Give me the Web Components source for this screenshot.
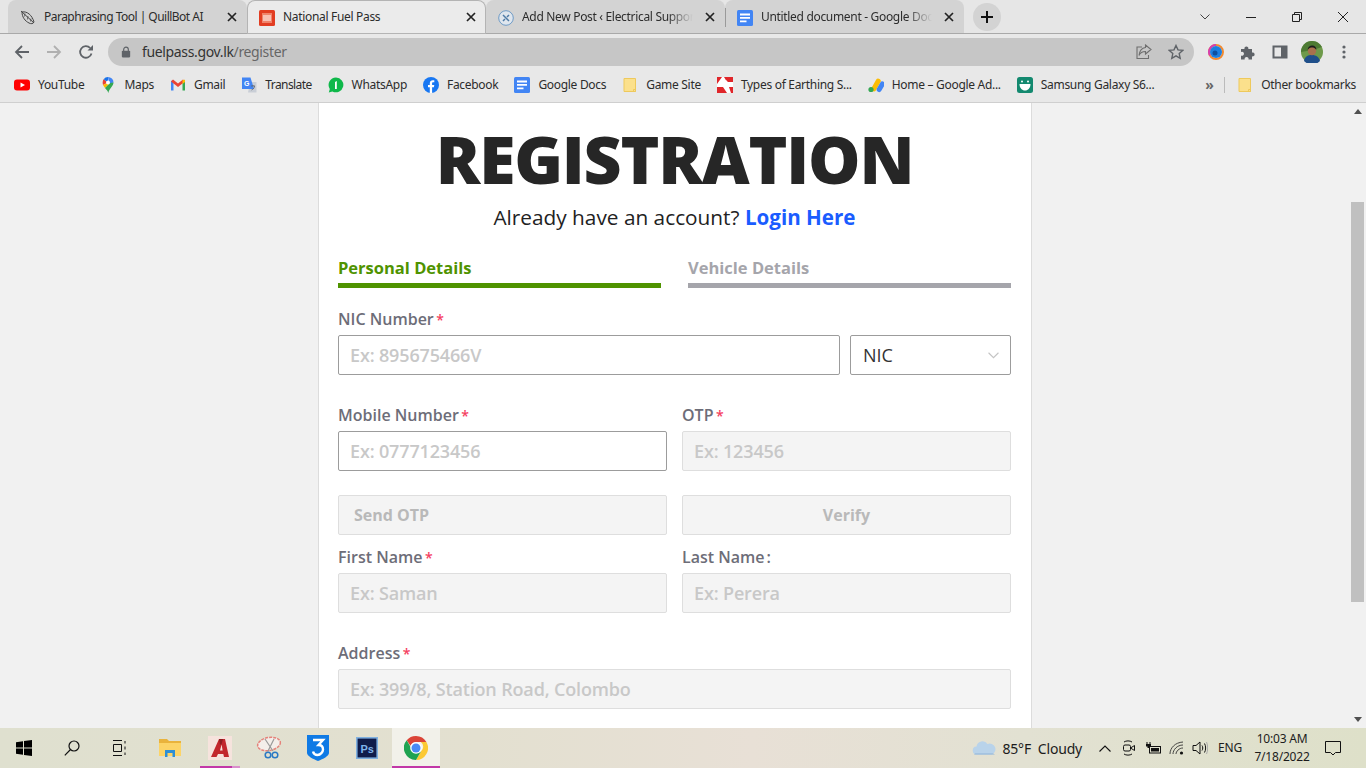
<!DOCTYPE html>
<html lang="en">
<head>
<meta charset="utf-8">
<title>National Fuel Pass</title>
<style>
  html, body { margin: 0; height: 100%; overflow: hidden; }
  body { font-family: "Open Sans", sans-serif; }
</style>
</head>
<body>
<browser-window>
  <reg-page></reg-page>
</browser-window>
<win-taskbar></win-taskbar>

<script>
(function () {
  'use strict';

  const UI_FONT = '"Noto Sans", "Open Sans", sans-serif';

  // ── Icons ──────────────────────────────────────────────────
  const FOLDER = '<svg viewBox="0 0 16 16" width="16" height="16"><path d="M2 1.5h11.5v13H2z" fill="#fbe08c" stroke="#eec95c"/><path d="M11.5 12.5h2v2h-2z" fill="none" stroke="#eec95c"/></svg>';
  const DOCS = '<svg viewBox="0 0 16 16" width="16" height="16"><rect width="16" height="16" rx="1.5" fill="#4285f4"/><path d="M3 3.5h10v2H3zM3 7h10v1.8H3zM3 10.5h6.5v1.8H3z" fill="#fff"/></svg>';

  const ICONS = {
    quill: '<svg viewBox="0 0 16 16" width="16" height="16" fill="none" stroke="#444" stroke-width="1"><path d="M1 1l13 12M2 2c5-1 10 3 12 10-1 2-3 2-5 1C5 11 2 7 2 2z"/><path d="M5 3.5l-.5 3M8 6l-.6 3.5M11 8.500l-.5 3" stroke-width=".7"/></svg>',
    fuel: '<svg viewBox="0 0 16 16" width="16" height="16"><rect width="16" height="16" rx="1.5" fill="#e23d22"/><rect x="3" y="3" width="10" height="10" fill="#f0836a"/><path d="M4 6h8M4 8h8M4 10h8" stroke="#fff" stroke-width="1.1"/></svg>',
    wp: '<svg viewBox="0 0 16 16" width="16" height="16" fill="none"><circle cx="8" cy="8" r="7.300" fill="#dfe6ee" stroke="#6f9bc6"/><path d="M5 5l6 6M11 5L9 7M5 11l2-2" stroke="#4f7ba6" stroke-width="1.500"/></svg>',
    docs: DOCS,
    youtube: '<svg viewBox="0 0 16 16" width="16" height="16"><rect y="2.500" width="16" height="11" rx="3" fill="#f00"/><path d="M6.500 5.500v5L11 8z" fill="#fff"/></svg>',
    maps: '<svg viewBox="0 0 16 16" width="16" height="16"><path d="M8 0a5.500 5.500 0 0 1 5.500 5.500L9 7z" fill="#4285f4"/><path d="M3.600 2.200L8 5.500 3 8C2.500 6 2.500 3.500 3.600 2.200z" fill="#ea4335"/><path d="M3.600 2.200A5.500 5.500 0 0 1 8 0v5.500z" fill="#1a73e8"/><path d="M3 8l5-2.500 1.500 1.500L5 11z" fill="#fbbc04"/><path d="M13.500 5.500C13.500 9 9.500 11 8.300 16c-.4-2-2-3.500-3.300-5l5-5z" fill="#34a853"/><circle cx="8" cy="5.500" r="2" fill="#fff"/></svg>',
    gmail: '<svg viewBox="0 0 16 16" width="16" height="16"><path d="M1 13.500V4l2.500-1V13.500z" fill="#4285f4"/><path d="M12.500 13.500V3L15 4v9.500z" fill="#34a853"/><path d="M1 4.500L3 2.500 8 6.500l5-4 2 2-7 5.500z" fill="#ea4335"/><path d="M12.500 3L15 2.800V5l-2.500 2z" fill="#fbbc04"/></svg>',
    translate: '<svg viewBox="0 0 16 16" width="16" height="16"><path d="M9 5h6.500v10.500H7z" fill="#c9ced6"/><path d="M1 .5h8.500L13 12H1z" fill="#4285f4"/><text x="3" y="9" font-size="7" font-weight="700" font-family="Liberation Sans" fill="#fff">G</text><path d="M10 9h4M12 8v1M10.500 13c2-1 3-2 3-4" stroke="#5f6368" stroke-width=".8" fill="none"/></svg>',
    whatsapp: '<svg viewBox="0 0 16 16" width="16" height="16"><path d="M8 .5a7.400 7.400 0 1 1-3.600 13.900L.8 15.400l1-3.500A7.400 7.400 0 0 1 8 .5z" fill="#0fb84a"/><path d="M7 5l1.800-1V12H7V6z" fill="#fff"/></svg>',
    facebook: '<svg viewBox="0 0 16 16" width="16" height="16"><circle cx="8" cy="8" r="8" fill="#1877f2"/><path d="M6.800 16V10.300H5V8h1.800V6.300C6.800 4.300 8 3.200 9.800 3.200l1.500.1v2h-1c-1 0-1.200.5-1.200 1.100V8h2.200l-.4 2.300H9.100V16z" fill="#fff"/></svg>',
    folder: FOLDER,
    earthing: '<svg viewBox="0 0 16 16" width="16" height="16"><rect width="16" height="16" fill="#fff"/><path d="M0 0h5L0 7zM7 0h9v5H10zM0 10h6l4 6H0zM12 10h4v6h-2z" fill="#e0262a"/><path d="M3 6h6V3l5 5-5 5v-3H3z" fill="#fff"/></svg>',
    ads: '<svg viewBox="0 0 16 16" width="16" height="16"><rect x="5.500" y="1" width="5" height="14" rx="2.500" transform="rotate(30 8 8)" fill="#fbbc04"/><rect x="10.300" y="4" width="5" height="11.500" rx="2.500" transform="rotate(30 12.800 9.700)" fill="#4285f4"/><circle cx="3" cy="12.500" r="2.600" fill="#34a853"/></svg>',
    samsung: '<svg viewBox="0 0 16 16" width="16" height="16"><rect width="16" height="16" rx="2.500" fill="#13896f"/><circle cx="5" cy="4.500" r="1" fill="#fff"/><circle cx="11" cy="4.500" r="1" fill="#fff"/><path d="M2.500 7h11c0 4-2.500 6.500-5.500 6.500S2.500 11 2.500 7z" fill="#fff"/></svg>',
    back: '<svg viewBox="0 0 16 16" width="16" height="16" fill="none" stroke="#5f6368" stroke-width="1.800"><path d="M15 8H2M8 2L2 8l6 6"/></svg>',
    forward: '<svg viewBox="0 0 16 16" width="16" height="16" fill="none" stroke="#b0b0b0" stroke-width="1.800"><path d="M1 8h13M8 2l6 6-6 6"/></svg>',
    reload: '<svg viewBox="0 0 16 16" width="16" height="16" fill="none"><path d="M13.500 9.500A5.800 5.800 0 1 1 12.200 4" stroke="#5f6368" stroke-width="1.800"/><path d="M9.500 6.500H15V1z" fill="#5f6368"/></svg>',
    lock: '<svg viewBox="0 0 12 14" width="10" height="12"><path d="M3.200 6V4a2.800 2.800 0 0 1 5.600 0v2" fill="none" stroke="#5f6368" stroke-width="1.400"/><rect x="1" y="5.500" width="10" height="8" rx="1" fill="#5f6368"/></svg>',
    share: '<svg viewBox="0 0 16 16" width="16" height="16" fill="none" stroke="#6e6e6e" stroke-width="1.100"><path d="M6 3H1v11.500h11.500V11"/><path d="M9.500 1l5.500 4.500L9.500 10V7.500C6 7.500 4 9 3 11.500 3.500 7 6 4 9.500 3.500z"/></svg>',
    star: '<svg viewBox="0 0 16 16" width="16" height="16" fill="none" stroke="#5f6368" stroke-width="1.400"><path d="M8 1.500l2 4.400 4.700.5-3.500 3.200 1 4.700L8 11.900l-4.200 2.400 1-4.700L1.300 6.400 6 5.900z"/></svg>',
    ring: '<svg viewBox="0 0 16 16" width="16" height="16"><circle cx="8" cy="8" r="7" fill="none" stroke="#f28a30" stroke-width="2"/><path d="M8 1a7 7 0 0 0-6 10.500" fill="none" stroke="#d63fb0" stroke-width="2"/><circle cx="8" cy="8" r="6" fill="#1c7fe0"/><circle cx="7" cy="9" r="2.500" fill="#0c4fa0"/></svg>',
    puzzle: '<svg viewBox="0 0 16 16" width="16" height="16"><path d="M1 5h3.500a2 2 0 1 1 3.800 0H12v3.500a2 2 0 1 1 0 3.800V15.500H8.500a2 2 0 1 0-3.800 0H1v-4a2 2 0 1 0 0-3.500z" fill="#5f6368"/></svg>',
    panel: '<svg viewBox="0 0 16 16" width="16" height="16"><path d="M1.500 2.500h13v11h-13z" fill="none" stroke="#5f6368" stroke-width="2"/><path d="M9 2.500h6v11H9z" fill="#5f6368"/></svg>',
    avatar: '<svg viewBox="0 0 22 22" width="22" height="22"><circle cx="11" cy="11" r="11" fill="#6e9a4a"/><path d="M0 11a11 11 0 0 1 11-11c5 0 8 3 10 6L12 9z" fill="#4d7a33"/><path d="M3 20c1-5 4-6 8-6s7 2 8 6a11 11 0 0 1-16 0z" fill="#1f4f8a"/><circle cx="11" cy="10" r="4.200" fill="#a8714d"/><path d="M6.700 9c0-3 2-4.500 4.500-4.500S15.500 6 15.300 9c-1-2-3-2.500-4.300-2.500S7.700 7 6.700 9z" fill="#1d1d1d"/></svg>',
    dots: '<svg viewBox="0 0 4 16" width="4" height="16"><circle cx="2" cy="3" r="1.600" fill="#5f6368"/><circle cx="2" cy="8" r="1.600" fill="#5f6368"/><circle cx="2" cy="13" r="1.600" fill="#5f6368"/></svg>',
    close: '<svg viewBox="0 0 10 10" width="10" height="10" fill="none" stroke="#222" stroke-width="1.700"><path d="M1 1l8 8M9 1L1 9"/></svg>',
    plus: '<svg viewBox="0 0 12 12" width="12" height="12" fill="none" stroke="#111" stroke-width="2"><path d="M6 0v12M0 6h12"/></svg>',
    chevron: '<svg viewBox="0 0 10 6" width="10" height="6" fill="none" stroke="#444"><path d="M.5.5L5 5 9.500.5"/></svg>',
    minimize: '<svg viewBox="0 0 10 10" width="10" height="10" stroke="#222"><path d="M0 5.500h10"/></svg>',
    restore: '<svg viewBox="0 0 10 10" width="10" height="10" fill="none" stroke="#222"><path d="M.5 2.500h7v7h-7zM2.500 2.500v-2h7v7h-2"/></svg>',
    winclose: '<svg viewBox="0 0 10 10" width="10" height="10" fill="none" stroke="#222"><path d="M0 0l10 10M10 0L0 10"/></svg>',
    windows: '<svg viewBox="0 0 16 16" width="16" height="16"><path d="M0 2.300l7-1v6.300H0zM8 1.100L16 0v7.600H8zM0 8.500h7v6.300l-7-1zM8 8.500h8V16l-8-1.100z" fill="#000"/></svg>',
    search: '<svg viewBox="0 0 16 16" width="16" height="16" fill="none" stroke="#111" stroke-width="1.200"><circle cx="10" cy="6" r="5"/><path d="M6.500 9.500L.8 15.300"/></svg>',
    taskview: '<svg viewBox="0 0 16 16" width="16" height="16" fill="none" stroke="#111"><path d="M1 .5h9M1 15.500h9M1.500 4.500h8v7h-8zM13 1v2.500M13 6.500v3M13 12.500V15" /></svg>',
    explorer: '<svg viewBox="0 0 22 20" width="22" height="20"><path d="M0 1h8l2 2h12v15H0z" fill="#e9b33c"/><path d="M0 5h22v13H0z" fill="#fcd467"/><path d="M6 12h10v7h-2.500v-4h-5v4H6z" fill="#2d8fd6"/></svg>',
    autocad: '<svg viewBox="0 0 24 24" width="24" height="24"><rect width="24" height="24" fill="#f6e3dd"/><path d="M3 21L11 3h6l4 18h-5l-.7-3H10l-1.500 3zM12 14.500h2.600l-1-6z" fill="#c2272d"/><path d="M11 3h4l-1.500 5.500H12z" fill="#8f1c20"/></svg>',
    snip: '<svg viewBox="0 0 26 24" width="26" height="24" fill="none"><ellipse cx="13" cy="8" rx="11.500" ry="6.500" transform="rotate(-10 13 8)" fill="#f4eeea" stroke="#e5827a" stroke-width="1.500" stroke-dasharray="3 1"/><path d="M9 3l8 12M18 3l-6 12" stroke="#9a9a9a" stroke-width="1.200"/><circle cx="12" cy="19" r="2.800" stroke="#2a79c4" stroke-width="1.500"/><circle cx="19" cy="19" r="2.800" stroke="#2a79c4" stroke-width="1.500"/></svg>',
    shield: '<svg viewBox="0 0 22 26" width="22" height="26"><path d="M0 0h22v18c0 3-6 6-11 8C6 24 0 21 0 18z" fill="#0f7ae5"/><path d="M6 5h10l-4.500 5c3 0 4.500 2 4.500 4.500S13.500 20 10.500 20 6.500 18.500 6 16.500" fill="none" stroke="#fff" stroke-width="2.400"/></svg>',
    ps: '<svg viewBox="0 0 22 22" width="22" height="22"><rect x=".8" y=".8" width="20.400" height="20.400" fill="#101c4a" stroke="#7fb0e0" stroke-width="1.600"/><text x="4.500" y="15.500" font-size="11" font-weight="700" font-family="Liberation Sans" fill="#7fb4ea">Ps</text></svg>',
    chrome: '<svg viewBox="0 0 24 24" width="24" height="24"><path d="M12 0a12 12 0 0 1 10.400 6H12a6 6 0 0 0-5.600 3.800L2.700 4.300A12 12 0 0 1 12 0z" fill="#db4437"/><path d="M22.400 6A12 12 0 0 1 12 24l4.900-8.500a6 6 0 0 0 0-9.500z" fill="#fcc934"/><path d="M12 24A12 12 0 0 1 2.700 4.300l4.900 8.500a6 6 0 0 0 9.300 2.700z" fill="#1fa351"/><circle cx="12" cy="12" r="5.800" fill="#fff"/><circle cx="12" cy="12" r="4.500" fill="#4a8af4"/></svg>',
    cloud: '<svg viewBox="0 0 24 14" width="24" height="14"><path d="M5 13.500a4 4 0 0 1-.5-8A6 6 0 0 1 15.500 3 5 5 0 0 1 20 13.500z" fill="#b9d3ea"/><path d="M3 12.500h18l2 1H2z" fill="#8fb4d8"/></svg>',
    up: '<svg viewBox="0 0 12 7" width="12" height="7" fill="none" stroke="#111" stroke-width="1.100"><path d="M.5 6.500L6 1l5.500 5.500"/></svg>',
    meet: '<svg viewBox="0 0 14 16" width="14" height="16" fill="none" stroke="#111"><path d="M2 2c2-1.500 6-1.500 8 0M2 14c2 1.500 6 1.500 8 0"/><rect x="1.500" y="5" width="7" height="6" rx="1.500"/><path d="M8.500 8l4-2.500v5z"/></svg>',
    battery: '<svg viewBox="0 0 16 12" width="16" height="12"><path d="M2 0v2M5 0v2" stroke="#111"/><path d="M1 2h5v2.500H4.500V6H2.500V4.500H1z" fill="#111"/><rect x="4.500" y="4.500" width="11" height="6.500" fill="none" stroke="#111"/><rect x="6" y="6" width="8" height="3.500" fill="#111"/></svg>',
    wifi: '<svg viewBox="0 0 16 14" width="16" height="14" fill="none" stroke="#333" stroke-width=".9"><path d="M1 13C1 7 6 1.500 14 1M4 13c0-4 4-9 10-9M7 13c0-2.500 3-6 7-6" /><circle cx="12.500" cy="12" r="1.600" fill="#111" stroke="none"/></svg>',
    volume: '<svg viewBox="0 0 16 14" width="16" height="14" fill="none" stroke="#111"><path d="M1 4.500h3L8 1v12L4 9.500H1z"/><path d="M10 4.500c1 1.500 1 3.500 0 5M12.500 2.500c1.500 2.500 1.500 6.500 0 9" /><path d="M14.500 1c1.600 3.500 1.600 8.500 0 12" stroke="#aaa"/></svg>',
    notify: '<svg viewBox="0 0 16 16" width="16" height="16" fill="none" stroke="#111"><path d="M.5 1.500h15v11h-5L8 15l-2.500-2.500h-5z"/></svg>',
    sbup: '<svg viewBox="0 0 8 5" width="8" height="5"><path d="M4 0l4 5H0z" fill="#505050"/></svg>',
    sbdown: '<svg viewBox="0 0 8 5" width="8" height="5"><path d="M4 5L0 0h8z" fill="#505050"/></svg>'
  };

  function icon(name) { return ICONS[name] || ''; }

  // Small helper: every element gets an open shadow root from a template
  function shadow(el, html) {
    const tpl = document.createElement('template');
    tpl.innerHTML = html;
    el.attachShadow({ mode: 'open' }).appendChild(tpl.content.cloneNode(true));
  }

  // ── Browser chrome ─────────────────────────────────────────
  class BrowserTab extends HTMLElement {
    connectedCallback() {
      const active = this.hasAttribute('active');
      const fade = this.hasAttribute('fade');
      const tracking = this.getAttribute('tracking') || '-.32px';
      shadow(this, `
        <style>
          :host {
            display: flex; align-items: center; box-sizing: border-box;
            width: 239px; height: 33px; padding: 0 9px 0 12px;
            background: ${active ? '#ebebeb' : '#d3d3d3'};
            border-radius: 8px 8px 0 0;
            ${active ? 'box-shadow: inset 0 0 0 1px #b4b4b4; height: 34px; z-index: 1;' : ''}
          }
          .ico { width: 16px; height: 16px; flex: none; }
          .title {
            flex: 1; min-width: 0; margin: 0 12px 0 8px; white-space: nowrap; overflow: hidden;
            font: 12px/16px ${UI_FONT}; letter-spacing: ${tracking}; color: #2c2c2c;
            ${fade ? '-webkit-mask-image: linear-gradient(90deg,#000 85%,transparent);' : ''}
          }
          .x { width: 10px; height: 10px; flex: none; margin-right: 1px; display: flex; }
        </style>
        <span class="ico">${icon(this.getAttribute('icon'))}</span>
        <span class="title"><slot></slot></span>
        <span class="x">${icon('close')}</span>`);
    }
  }

  class BookmarkItem extends HTMLElement {
    connectedCallback() {
      const tracking = this.getAttribute('tracking') || '-.3px';
      shadow(this, `
        <style>
          :host {
            display: flex; align-items: center; gap: 8px; padding: 0 8px; height: 28px; flex: none;
            font: 12px/16px ${UI_FONT}; letter-spacing: ${tracking}; color: #2c2c2c; white-space: nowrap;
          }
          span { display: flex; }
        </style>
        <span>${icon(this.getAttribute('icon'))}</span><slot></slot>`);
    }
  }

  class IconButton extends HTMLElement {
    connectedCallback() {
      const w = this.getAttribute('w') || '32';
      shadow(this, `
        <style>
          :host { display: flex; align-items: center; justify-content: center; width: ${w}px; height: 100%; flex: none; }
          span { display: flex; }
        </style>
        <span>${icon(this.getAttribute('icon'))}</span>`);
    }
  }

  class BrowserWindow extends HTMLElement {
    connectedCallback() {
      shadow(this, `
        <style>
          :host { display: flex; flex-direction: column; height: 728px; background: #e8e8e8; }
          .strip {
            display: flex; align-items: flex-start; height: 33px; padding-left: 8px; flex: none;
            background: #e6e6e6; border-bottom: 1px solid #a9a9a9;
          }
          .sep { width: 1px; height: 19px; margin: 8px -1px 0 0; background: #9a9a9a; z-index: 2; }
          .plus {
            width: 28px; height: 28px; margin: 3px 0 0 9px; border-radius: 50%; background: #d3d3d3;
            display: flex; align-items: center; justify-content: center; flex: none;
          }
          .win { display: flex; height: 33px; margin-left: auto; }
          .tools { display: flex; align-items: center; height: 35px; padding-left: 6px; flex: none; }
          .omni {
            display: flex; align-items: center; width: 1086px; height: 28px; margin: 0 6px 0 6px;
            background: #c6c6c6; border-radius: 14px; flex: none; box-sizing: border-box; padding: 0 2px 0 13px;
          }
          .lock { display: flex; margin-right: 11px; }
          .url { flex: 1; font: 14px/20px ${UI_FONT}; letter-spacing: -.35px; color: #333; }
          .url i { font-style: normal; color: #666; }
          .marks {
            display: flex; align-items: center; box-sizing: border-box; height: 34px; padding: 0 0 2px 6px; flex: none;
            border-bottom: 1px solid #cfcfcf;
          }
          .more { font: 700 14px/16px ${UI_FONT}; color: #666; margin-left: auto; width: 29px; text-align: center; }
          .vsep { width: 1px; height: 16px; background: #bbb; flex: none; }
          .end { margin: 0 2px 0 4px; }
          ::slotted(*) { flex: 1; min-height: 0; }
        </style>
        <div class="strip">
          <browser-tab icon="quill" tracking="-.52px">Paraphrasing Tool | QuillBot AI</browser-tab>
          <browser-tab icon="fuel" active>National Fuel Pass</browser-tab>
          <browser-tab icon="wp" fade>Add New Post ‹ Electrical Support</browser-tab>
          <div class="sep"></div>
          <browser-tab icon="docs" fade>Untitled document - Google Docs</browser-tab>
          <div class="plus">${icon('plus')}</div>
          <div class="win">
            <icon-button icon="chevron" w="46"></icon-button>
            <icon-button icon="minimize" w="46"></icon-button>
            <icon-button icon="restore" w="46"></icon-button>
            <icon-button icon="winclose" w="46"></icon-button>
          </div>
        </div>
        <div class="tools">
          <icon-button icon="back"></icon-button>
          <icon-button icon="forward"></icon-button>
          <icon-button icon="reload"></icon-button>
          <div class="omni">
            <span class="lock">${icon('lock')}</span>
            <span class="url">fuelpass.gov.lk<i>/register</i></span>
            <icon-button icon="share"></icon-button>
            <icon-button icon="star"></icon-button>
          </div>
          <icon-button icon="ring"></icon-button>
          <icon-button icon="puzzle"></icon-button>
          <icon-button icon="panel"></icon-button>
          <icon-button icon="avatar"></icon-button>
          <icon-button icon="dots"></icon-button>
        </div>
        <div class="marks">
          <bookmark-item icon="youtube">YouTube</bookmark-item>
          <bookmark-item icon="maps">Maps</bookmark-item>
          <bookmark-item icon="gmail">Gmail</bookmark-item>
          <bookmark-item icon="translate" tracking="-.6px">Translate</bookmark-item>
          <bookmark-item icon="whatsapp">WhatsApp</bookmark-item>
          <bookmark-item icon="facebook">Facebook</bookmark-item>
          <bookmark-item icon="docs">Google Docs</bookmark-item>
          <bookmark-item icon="folder">Game Site</bookmark-item>
          <bookmark-item icon="earthing">Types of Earthing S...</bookmark-item>
          <bookmark-item icon="ads">Home – Google Ad...</bookmark-item>
          <bookmark-item icon="samsung">Samsung Galaxy S6...</bookmark-item>
          <span class="more">»</span>
          <span class="vsep"></span>
          <bookmark-item class="end" icon="folder">Other bookmarks</bookmark-item>
        </div>
        <slot></slot>`);
    }
  }

  // ── Form parts ─────────────────────────────────────────────
  class FormInput extends HTMLElement {
    connectedCallback() {
      const off = this.hasAttribute('disabled');
      shadow(this, `
        <style>
          :host {
            display: flex; align-items: center; box-sizing: border-box; height: 40px; padding: 0 11px;
            background: ${off ? '#f4f4f4' : '#fff'}; border: 1px solid ${off ? '#dedede' : '#9c9c9c'};
            border-radius: 2px; font: 600 18px/24px "Open Sans", sans-serif; letter-spacing: -.15px;
            color: #c8c8c8; white-space: nowrap;
          }
        </style><slot></slot>`);
    }
  }

  class FormField extends HTMLElement {
    connectedCallback() {
      const req = this.hasAttribute('required');
      const extra = req ? '<b>*</b>' : (this.hasAttribute('colon') ? '<u>:</u>' : '');
      shadow(this, `
        <style>
          :host { display: block; min-width: 0; }
          label {
            display: block; height: 24px; margin-bottom: 4px;
            font: 600 16px/24px "Open Sans", sans-serif; color: #6d6d78; white-space: nowrap;
          }
          b { color: #f5405f; font-weight: 600; font-size: 14px; margin-left: 2.5px; }
          u { text-decoration: none; margin-left: 2px; }
        </style>
        <label>${this.getAttribute('label')}${extra}</label>
        <slot></slot>`);
    }
  }

  class StepTab extends HTMLElement {
    connectedCallback() {
      const c = this.hasAttribute('active') ? '#4f9300' : '#a5a5ab';
      shadow(this, `
        <style>
          :host {
            display: block; flex: 1; border-bottom: 5px solid ${c}; padding-bottom: 3px;
            font: 700 16.5px/24px "Open Sans", sans-serif; color: ${c};
          }
        </style><slot></slot>`);
    }
  }

  class FormButton extends HTMLElement {
    connectedCallback() {
      const center = this.hasAttribute('center');
      shadow(this, `
        <style>
          :host {
            display: flex; align-items: center; justify-content: ${center ? 'center' : 'flex-start'};
            box-sizing: border-box; height: 40px; padding: 0 15px;
            background: #f4f4f4; border: 1px solid #dedede; border-radius: 2px;
            font: 700 16px/24px "Open Sans", sans-serif; color: #b9b9b9;
          }
        </style><slot></slot>`);
    }
  }

  class PageScrollbar extends HTMLElement {
    connectedCallback() {
      shadow(this, `
        <style>
          :host { display: flex; flex-direction: column; width: 17px; flex: none; background: #f1f1f1; }
          .arrow { height: 17px; display: flex; align-items: center; justify-content: center; flex: none; }
          .gap1 { height: 82px; }
          .thumb { height: 400px; margin: 0 2px; background: #c0c0c0; flex: none; }
          .gap2 { flex: 1; }
        </style>
        <div class="arrow">${icon('sbup')}</div>
        <div class="gap1"></div>
        <div class="thumb"></div>
        <div class="gap2"></div>
        <div class="arrow">${icon('sbdown')}</div>`);
    }
  }

  class RegPage extends HTMLElement {
    connectedCallback() {
      shadow(this, `
        <style>
          :host { display: flex; background: #f1f1f1; overflow: hidden; }
          .main { flex: 1; min-width: 0; padding-left: 318px; overflow: hidden; }
          .card {
            box-sizing: border-box; width: 714px; height: 100%; padding: 15px 20px 0 19px;
            background: #fff; border: solid #dcdcdc; border-width: 0 1px;
          }
          h1 {
            margin: 0; text-align: center; letter-spacing: -1.2px;
            font: 800 66px/80px "Open Sans", sans-serif; color: #262626;
          }
          .sub { margin: 5px 0 0; text-align: center; font: 20.8px/28px "Open Sans", sans-serif; color: #222; }
          .sub a { font-weight: 700; font-size: 20.6px; color: #1a5cff; text-decoration: none; }
          .steps { display: flex; gap: 27px; margin-top: 25px; }
          .nic { margin-top: 19px; }
          .row { display: flex; gap: 10px; }
          .row form-input:first-child { flex: 1; }
          .select { width: 161px; flex: none; padding-left: 12px; }
          .grid { display: grid; grid-template-columns: 329px 329px; column-gap: 15px; }
          .m28 { margin-top: 28px; }
          .m24 { margin-top: 24px; }
          .m10 { margin-top: 10px; }
          .val { color: #333; font-weight: 400; letter-spacing: 0; }
          .caret { margin-left: auto; display: flex; }
          .caret svg { stroke: #c4c4c4; width: 11px; height: 7px; }
        </style>
        <div class="main">
          <div class="card">
            <h1>REGISTRATION</h1>
            <p class="sub">Already have an account? <a href="#">Login Here</a></p>
            <div class="steps">
              <step-tab active>Personal Details</step-tab>
              <step-tab>Vehicle Details</step-tab>
            </div>
            <form-field class="nic" label="NIC Number" required>
              <div class="row">
                <form-input>Ex: 895675466V</form-input>
                <form-input class="select"><span class="val">NIC</span><span class="caret"><svg viewBox="0 0 10 6" fill="none"><path d="M.5.5L5 5 9.500.5"/></svg></span></form-input>
              </div>
            </form-field>
            <div class="grid m28">
              <form-field label="Mobile Number" required><form-input>Ex: 0777123456</form-input></form-field>
              <form-field label="OTP" required><form-input disabled>Ex: 123456</form-input></form-field>
            </div>
            <div class="grid m24">
              <form-button>Send OTP</form-button>
              <form-button center>Verify</form-button>
            </div>
            <div class="grid m10">
              <form-field label="First Name" required><form-input disabled>Ex: Saman</form-input></form-field>
              <form-field label="Last Name" colon><form-input disabled>Ex: Perera</form-input></form-field>
            </div>
            <form-field class="m28" label="Address" required>
              <form-input disabled>Ex: 399/8, Station Road, Colombo</form-input>
            </form-field>
          </div>
        </div>
        <page-scrollbar></page-scrollbar>`);
    }
  }

  // ── Taskbar ────────────────────────────────────────────────
  class TaskItem extends HTMLElement {
    connectedCallback() {
      const active = this.hasAttribute('active');
      const stripe = this.getAttribute('stripe');
      shadow(this, `
        <style>
          :host {
            display: flex; flex-direction: column; box-sizing: border-box;
            width: 48px; height: 40px; flex: none;
            ${active ? 'background: #f2f1ea;' : ''}
          }
          .ico { flex: 1; display: flex; align-items: center; justify-content: center; padding-top: 2px; }
          .bar { height: 2px; flex: none; ${stripe ? `background: ${stripe};` : ''} }
        </style>
        <div class="ico">${icon(this.getAttribute('icon'))}</div>
        <div class="bar"></div>`);
    }
  }

  class WinTaskbar extends HTMLElement {
    connectedCallback() {
      shadow(this, `
        <style>
          :host {
            display: flex; align-items: center; height: 40px;
            background: linear-gradient(90deg, #dfe0cf 0, #e3e0d0 35%, #e8e0d6 55%, #e2e1d2 75%, #dee0c9 100%);
            font: 14px/18px ${UI_FONT}; color: #1c1c1c;
          }
          .apps { display: flex; gap: 1px; margin-left: 2px; }
          .apps .cad { margin-left: 1px; }
          .tray { display: flex; align-items: center; height: 100%; margin-left: auto; padding-right: 14px; }
          .t { display: flex; align-items: center; justify-content: center; height: 100%; flex: none; }
          .weather { display: flex; align-items: center; gap: 7px; margin-right: 11px; white-space: pre; letter-spacing: -.2px; }
          .weather span { padding-top: 2px; }
          .clock { text-align: center; font-size: 12px; line-height: 18px; width: 64px; margin-left: 2px; letter-spacing: -.2px; }
          .eng { font-size: 12px; width: 36px; letter-spacing: -.2px; margin-left: 1px; }
        </style>
        <task-item icon="windows"></task-item>
        <task-item icon="search"></task-item>
        <task-item icon="taskview"></task-item>
        <div class="apps">
          <task-item icon="explorer"></task-item>
          <task-item class="cad" icon="autocad" stripe="linear-gradient(90deg,transparent 4px,#c238a8 4px,#c238a8 36px,#d98fcc 36px,#d98fcc 44px,transparent 44px)"></task-item>
          <task-item icon="snip"></task-item>
          <task-item icon="shield"></task-item>
          <task-item icon="ps"></task-item>
          <task-item icon="chrome" stripe="#c238a8" active></task-item>
        </div>
        <div class="tray">
          <div class="weather">${icon('cloud')}<span>85°F  Cloudy</span></div>
          <div class="t" style="width:24px">${icon('up')}</div>
          <div class="t" style="width:24px">${icon('meet')}</div>
          <div class="t" style="width:24px">${icon('battery')}</div>
          <div class="t" style="width:24px">${icon('wifi')}</div>
          <div class="t" style="width:22px">${icon('volume')}</div>
          <div class="t eng">ENG</div>
          <div class="clock">10:03 AM<br>7/18/2022</div>
          <div class="t" style="width:38px">${icon('notify')}</div>
        </div>`);
    }
  }

  customElements.define('browser-tab', BrowserTab);
  customElements.define('bookmark-item', BookmarkItem);
  customElements.define('icon-button', IconButton);
  customElements.define('browser-window', BrowserWindow);
  customElements.define('form-input', FormInput);
  customElements.define('form-field', FormField);
  customElements.define('step-tab', StepTab);
  customElements.define('form-button', FormButton);
  customElements.define('page-scrollbar', PageScrollbar);
  customElements.define('reg-page', RegPage);
  customElements.define('task-item', TaskItem);
  customElements.define('win-taskbar', WinTaskbar);
})();
</script>
</body>
</html>
